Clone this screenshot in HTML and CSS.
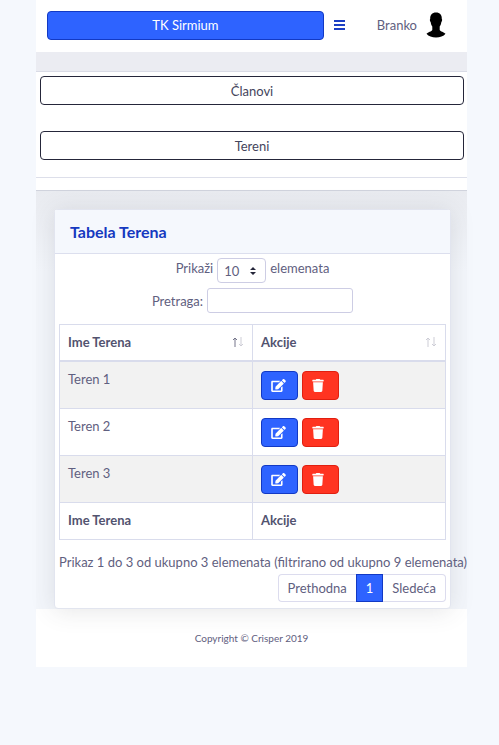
FILE: index.html
```html
<!DOCTYPE html>
<html lang="sr">
<head>
    <meta charset="UTF-8">
    <meta name="viewport" content="width=device-width, initial-scale=1.0">
    <title>TK Sirmium - Tereni</title>
    <link rel="stylesheet" href="styles.css">
</head>
<body>
    <!-- Icons -->
    <svg class="icon-defs" width="0" height="0" aria-hidden="true">
        <symbol id="icon-edit" viewBox="0 0 576 512">
            <path d="M402.600 83.200l90.200 90.200c3.800 3.800 3.800 10 0 13.800L274.400 405.600l-92.800 10.300c-12.400 1.400-22.900-9.100-21.500-21.500l10.300-92.800L388.800 83.200c3.800-3.800 10-3.800 13.800 0zm162-22.900l-48.800-48.800c-15.200-15.200-39.900-15.200-55.200 0l-35.400 35.400c-3.800 3.800-3.800 10 0 13.800l90.200 90.200c3.800 3.800 10 3.800 13.800 0l35.400-35.400c15.200-15.300 15.200-40 0-55.200zM384 346.200V448H64V128h229.800c3.200 0 6.200-1.300 8.500-3.500l40-40c7.600-7.600 2.200-20.500-8.500-20.500H48C21.500 64 0 85.500 0 112v352c0 26.500 21.500 48 48 48h352c26.500 0 48-21.500 48-48V306.200c0-10.700-12.900-16-20.500-8.500l-40 40c-2.200 2.300-3.500 5.300-3.500 8.500z"/>
        </symbol>
        <symbol id="icon-trash" viewBox="0 0 448 512">
            <path d="M432 32H312l-9.400-18.700A24 24 0 0 0 281.100 0H166.800a23.700 23.700 0 0 0-21.400 13.300L136 32H16A16 16 0 0 0 0 48v32a16 16 0 0 0 16 16h416a16 16 0 0 0 16-16V48a16 16 0 0 0-16-16zM53.200 467a48 48 0 0 0 47.900 45h245.800a48 48 0 0 0 47.900-45L416 128H32z"/>
        </symbol>
    </svg>

    <div class="wrapper">
        <header class="topbar">
            <button class="btn btn-primary brand">TK Sirmium</button>
            <button class="menu-toggle" aria-label="Meni">
                <svg width="12" height="12" viewBox="0 0 12 12"><path d="M0 1h11v2H0zM0 5h11v2H0zM0 9h11v2H0z"/></svg>
            </button>
            <a class="user" href="#">
                <span>Branko</span>
                <svg width="20" height="26" viewBox="0 0 20 26" aria-hidden="true">
                    <path d="M10 0.500C6 0.500 4 3 4.200 7C3.600 7.400 3.800 9 4.700 10.200C5 12.500 5.700 13.700 6.300 14.500V18C5.600 19.500 2 20 0.500 21.800C2.500 24.300 6 25.500 10 25.500S17.500 24.300 19.500 21.800C18 20 14.400 19.500 13.700 18V14.500C14.300 13.700 15 12.500 15.300 10.200C16.200 9 16.400 7.400 15.800 7C16 3 14 0.500 10 0.500Z"/>
                </svg>
            </a>
        </header>

        <nav class="sections">
            <div class="sections-list">
                <button class="btn btn-outline">Članovi</button>
                <button class="btn btn-outline">Tereni</button>
            </div>
        </nav>

        <main class="content">
            <section class="card">
                <h1 class="card-title">Tabela Terena</h1>
                <div class="card-body">
                    <div class="filter filter-length">
                        <label for="length">Prikaži</label>
                        <span class="select-box">
                            <select id="length">
                                <option selected>10</option>
                                <option>25</option>
                                <option>50</option>
                                <option>100</option>
                            </select>
                            <svg class="select-arrows" width="6" height="8" viewBox="0 0 6 8"><path d="M3 0L6 3H0zM3 8L0 5h6z"/></svg>
                        </span>
                        <span>elemenata</span>
                    </div>
                    <div class="filter">
                        <label for="search">Pretraga:</label>
                        <input type="search" id="search">
                    </div>

                    <table>
                        <thead>
                            <tr>
                                <th><div class="sort">Ime Terena <svg width="12" height="10" viewBox="0 0 12 10"><path class="on" d="M3 10V1M1 3l2-2 2 2"/><path d="M9 0v9M7 7l2 2 2-2"/></svg></div></th>
                                <th><div class="sort">Akcije <svg width="12" height="10" viewBox="0 0 12 10"><path d="M3 10V1M1 3l2-2 2 2"/><path d="M9 0v9M7 7l2 2 2-2"/></svg></div></th>
                            </tr>
                        </thead>
                        <tbody>
                            <tr>
                                <td>Teren 1</td>
                                <td>
                                    <div class="actions">
                                        <button class="btn btn-primary" aria-label="Izmeni"><svg width="15" height="13"><use href="#icon-edit"/></svg></button>
                                        <button class="btn btn-danger" aria-label="Obriši"><svg width="12" height="13"><use href="#icon-trash"/></svg></button>
                                    </div>
                                </td>
                            </tr>
                            <tr>
                                <td>Teren 2</td>
                                <td>
                                    <div class="actions">
                                        <button class="btn btn-primary" aria-label="Izmeni"><svg width="15" height="13"><use href="#icon-edit"/></svg></button>
                                        <button class="btn btn-danger" aria-label="Obriši"><svg width="12" height="13"><use href="#icon-trash"/></svg></button>
                                    </div>
                                </td>
                            </tr>
                            <tr>
                                <td>Teren 3</td>
                                <td>
                                    <div class="actions">
                                        <button class="btn btn-primary" aria-label="Izmeni"><svg width="15" height="13"><use href="#icon-edit"/></svg></button>
                                        <button class="btn btn-danger" aria-label="Obriši"><svg width="12" height="13"><use href="#icon-trash"/></svg></button>
                                    </div>
                                </td>
                            </tr>
                        </tbody>
                        <tfoot>
                            <tr>
                                <th>Ime Terena</th>
                                <th>Akcije</th>
                            </tr>
                        </tfoot>
                    </table>

                    <div class="info">Prikaz 1 do 3 od ukupno 3 elemenata (filtrirano od ukupno 9 elemenata)</div>
                    <div class="pagination">
                        <a href="#">Prethodna</a>
                        <a href="#" class="active">1</a>
                        <a href="#">Sledeća</a>
                    </div>
                </div>
            </section>
        </main>

        <footer class="footer">Copyright © Crisper 2019</footer>
    </div>
</body>
</html>
```
FILE: styles.css
```css
* {
    box-sizing: border-box;
}

body {
    margin: 0;
    padding: 0 32px 0 36px;
    background-color: #f5f8fd;
    color: #5f6080;
    font-family: Lato, "Noto Sans", sans-serif;
    font-size: 13px;
    line-height: 20px;
}

button, input, select {
    font: inherit;
    color: inherit;
}

a {
    color: inherit;
    text-decoration: none;
}

.icon-defs {
    position: absolute;
}

.wrapper {
    background-color: #ebecf2;
}

/* Top bar */
.topbar {
    display: flex;
    align-items: center;
    height: 52px;
    padding: 0 21px 2px 11px;
    background-color: #fff;
}

.btn {
    height: 29px;
    border: 1px solid;
    border-radius: 4px;
    padding: 0 9px;
    line-height: 18px;
    cursor: pointer;
}

.btn-primary {
    background-color: #2e63ff;
    border-color: #1239c4;
    color: #fff;
}

.btn-danger {
    background-color: #ff3421;
    border-color: #e01f10;
    color: #fff;
}

.btn-outline {
    background-color: #fff;
    border-color: #25263a;
    color: #44455c;
}

.brand {
    flex: 1;
}

.menu-toggle {
    display: flex;
    margin: 0 31px 0 10px;
    padding: 0;
    border: none;
    background: none;
    fill: #1c3fc4;
    cursor: pointer;
}

.user {
    display: flex;
    align-items: center;
    gap: 9px;
}

.user svg {
    fill: #000;
}

/* Section buttons */
.sections {
    margin-top: 19px;
    padding-bottom: 12px;
    border-top: 1px solid #d9dbe6;
    border-bottom: 1px solid #d0d3dd;
    background-color: #fff;
}

.sections-list {
    display: grid;
    gap: 26px;
    padding: 4px 3px 17px 4px;
    border-bottom: 1px solid #dddfea;
}

/* Card */
.content {
    padding: 18px 16px 0 18px;
    background: linear-gradient(#e9ebf0, #f3f6fb 80px);
}

.card {
    position: relative;
    border: 1px solid #e2e5ef;
    border-radius: 4px;
    background-color: #fff;
    box-shadow: 0 2px 24px rgba(58, 59, 69, 0.13);
}

.card-title {
    margin: 0;
    padding: 11px 15px;
    border-bottom: 1px solid #dcdfee;
    background-color: #f5f8fd;
    color: #1539c0;
    font-size: 16px;
    font-weight: 700;
    line-height: 21px;
}

.card-body {
    padding: 4px 4px 6px;
}

.filter {
    display: flex;
    align-items: center;
    justify-content: center;
    gap: 4px;
    height: 25px;
    margin-bottom: 5px;
}

.filter-length {
    align-items: flex-start;
}

.select-box {
    position: relative;
}

.filter select {
    appearance: none;
    width: 49px;
    height: 25px;
    padding: 0 6px;
    border: 1px solid #cdcde4;
    border-radius: 4px;
    background-color: #fff;
    vertical-align: top;
}

.select-arrows {
    position: absolute;
    top: 9px;
    right: 10px;
    fill: #25263a;
    pointer-events: none;
}

.filter input {
    width: 146px;
    height: 25px;
    border: 1px solid #cdcde4;
    border-radius: 3px;
    background-color: #fff;
}

/* Table */
table {
    width: 100%;
    margin-top: 11px;
    border-collapse: collapse;
    table-layout: fixed;
}

th, td {
    padding: 7px 8px 8px;
    border: 1px solid #d9dcec;
    text-align: left;
    vertical-align: top;
}

th {
    color: #52536f;
    font-weight: 700;
}

thead th {
    border-bottom-width: 2px;
}

tfoot th {
    padding-bottom: 9px;
}

tbody tr:nth-child(odd) {
    background-color: #f2f2f2;
}

.sort {
    display: flex;
    align-items: center;
    justify-content: space-between;
}

.sort svg {
    fill: none;
    stroke: #cdcdd6;
}

.sort .on {
    stroke: #74758a;
}

.actions {
    display: flex;
    gap: 4px;
    padding-top: 2px;
}

.actions .btn {
    display: flex;
    align-items: center;
    width: 37px;
}

.actions svg {
    fill: #fff;
}

.info {
    margin-top: 12px;
    white-space: nowrap;
}

.pagination {
    display: flex;
    justify-content: flex-end;
    margin-top: 2px;
}

.pagination a {
    padding: 3px 9px;
    border: 1px solid #dcdcee;
}

.pagination a:first-child {
    border-right: none;
    border-radius: 4px 0 0 4px;
}

.pagination a:last-child {
    border-left: none;
    border-radius: 0 4px 4px 0;
}

.pagination .active {
    background-color: #2e63ff;
    border-color: #1239c4;
    color: #fff;
}

/* Footer */
.footer {
    padding: 19px;
    background-color: #fff;
    font-size: 10px;
    text-align: center;
}
```
